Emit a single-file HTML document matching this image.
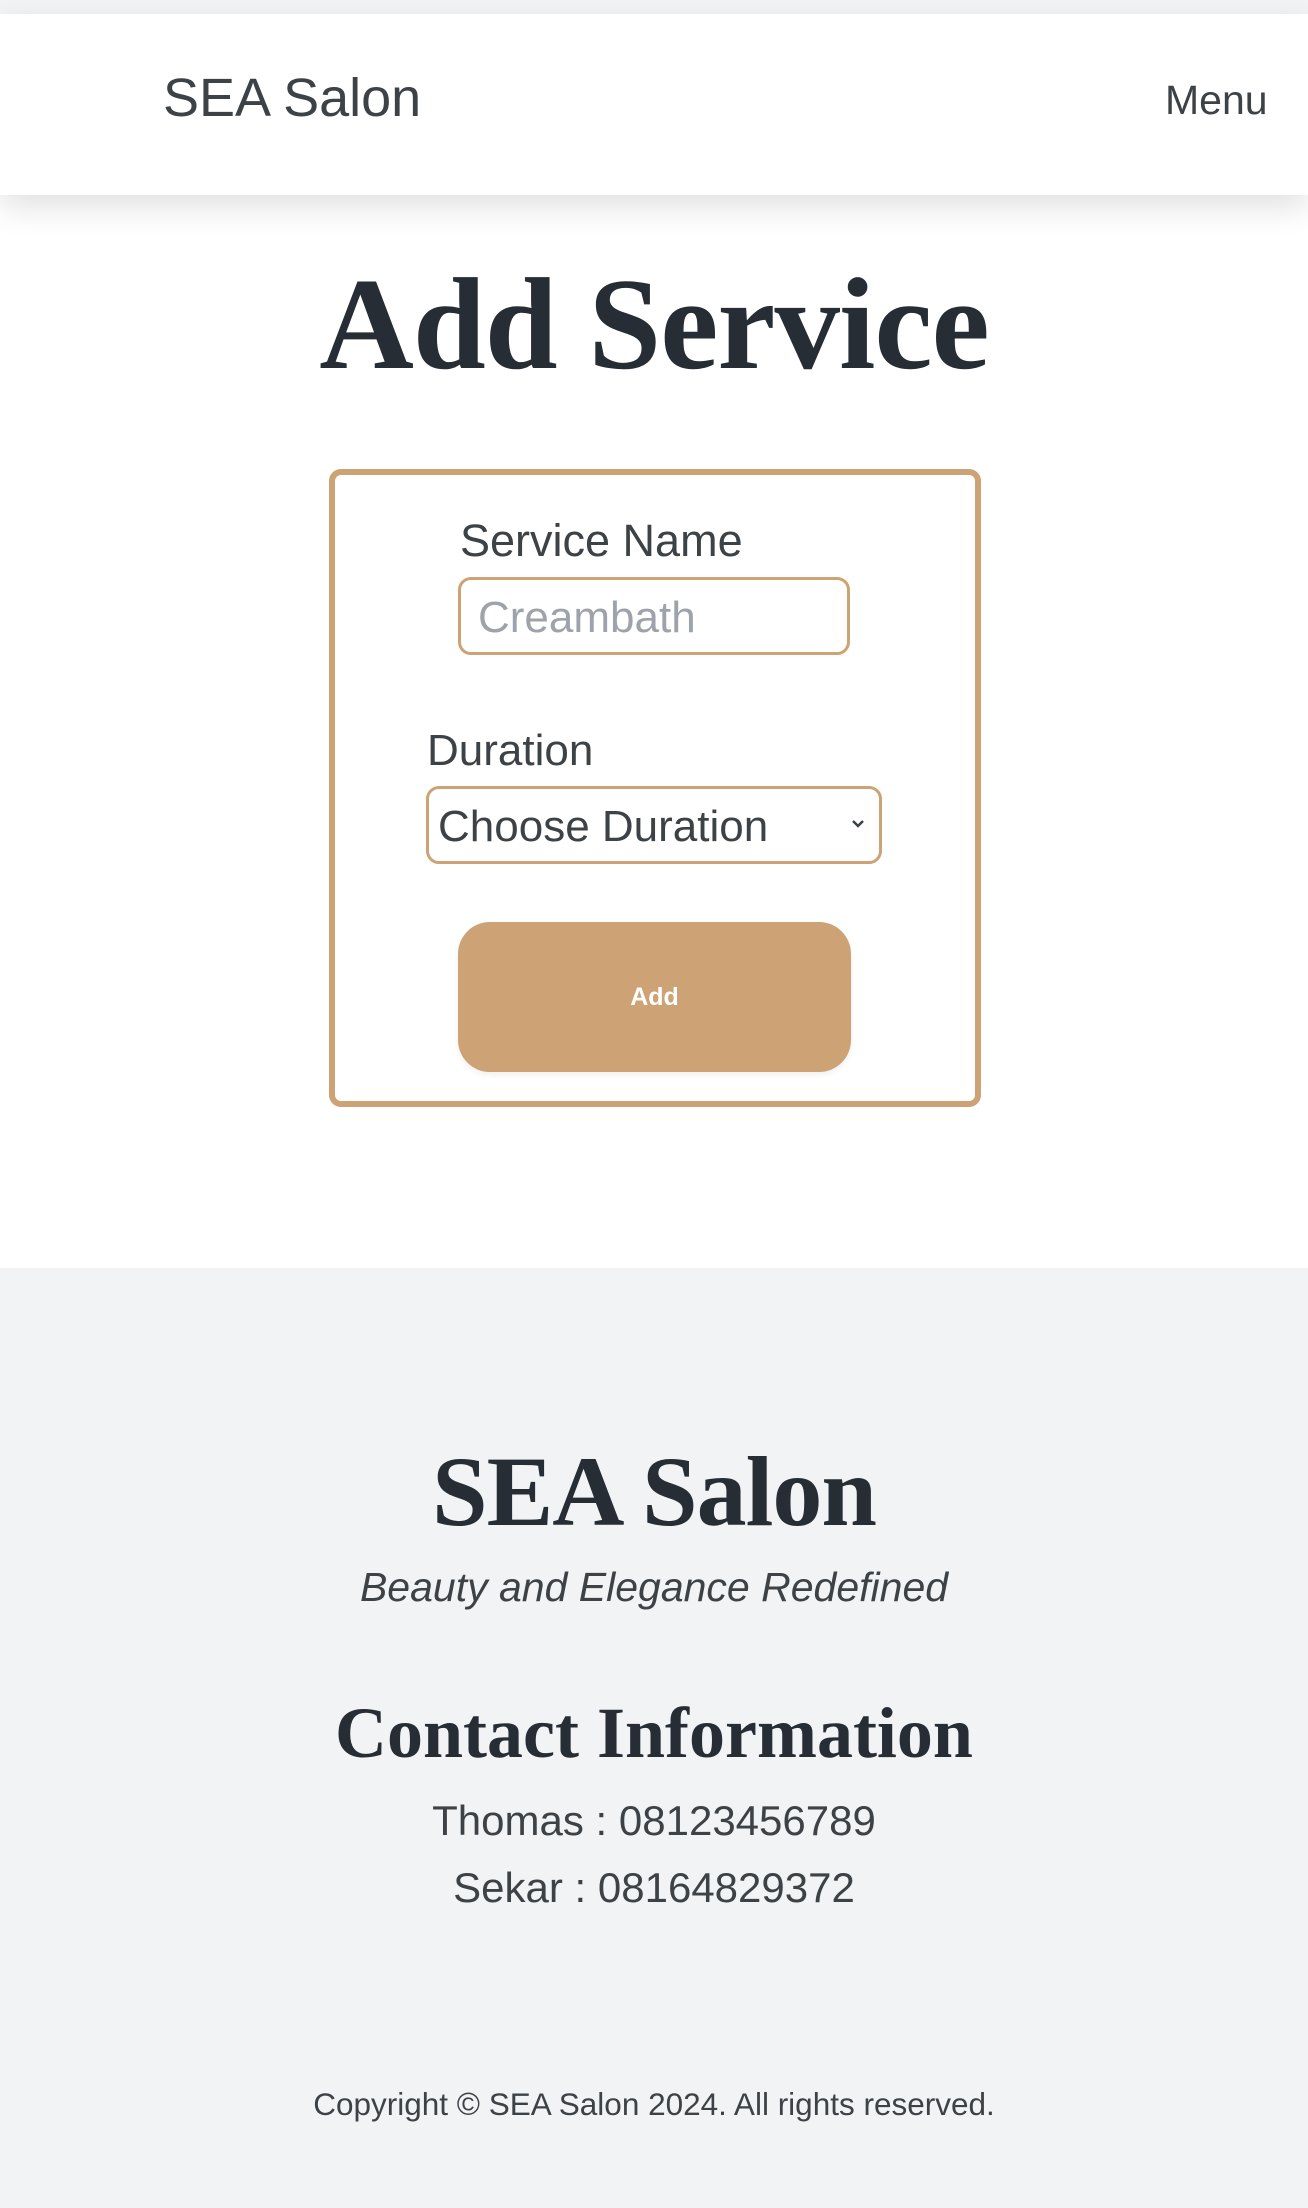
<!DOCTYPE html>
<html><head><meta charset="utf-8"><style>
*{margin:0;padding:0;box-sizing:border-box}
body{width:1308px;height:2208px;background:#fff;font-family:"Liberation Sans",sans-serif;position:relative;overflow:hidden}
.a{position:absolute;white-space:nowrap}
.top{left:0;top:0;width:1308px;height:14px;background:#f2f3f5}
.hdr{left:0;top:14px;width:1308px;height:181px;background:#fff;box-shadow:0 12px 30px rgba(0,0,0,0.12)}
.serif{font-family:"Liberation Serif",serif;font-weight:bold;color:#262d35}
.box{left:329px;top:469px;width:652px;height:638px;border:6px solid #cda275;border-radius:12px}
.field{border:3px solid #cda275;border-radius:13px;background:#fff}
.foot{left:0;top:1268px;width:1308px;height:940px;background:#f2f3f5}
.c{left:0;width:1308px;text-align:center}
</style></head><body>
<div class="a top"></div>
<div class="a hdr"></div>
<div class="a" style="left:163px;top:62px;font-size:54px;line-height:72px;color:#3d4247">SEA Salon</div>
<div class="a" style="left:1165px;top:76px;font-size:41px;line-height:48px;color:#3d4247">Menu</div>
<div class="a serif c" style="top:250px;font-size:131px;line-height:150px;letter-spacing:-1px">Add Service</div>
<div class="a box"></div>
<div class="a" style="left:460px;top:513px;font-size:45px;line-height:56px;color:#3d4247">Service Name</div>
<div class="a field" style="left:458px;top:577px;width:392px;height:78px"></div>
<div class="a" style="left:478px;top:590px;font-size:44px;line-height:56px;color:#9ea3ab">Creambath</div>
<div class="a" style="left:427px;top:723px;font-size:44px;line-height:56px;color:#3d4247">Duration</div>
<div class="a field" style="left:426px;top:786px;width:456px;height:78px"></div>
<div class="a" style="left:438px;top:799px;font-size:44px;line-height:56px;color:#3d4247">Choose Duration</div>
<svg class="a" style="left:850px;top:818px" width="16" height="12" viewBox="0 0 16 12"><path d="M3 3 L8 8 L13 3" fill="none" stroke="#3d4247" stroke-width="2.5"/></svg>
<div class="a" style="left:458px;top:922px;width:393px;height:150px;background:#cda275;border-radius:32px;box-shadow:0 3px 6px rgba(0,0,0,0.06)"></div>
<div class="a" style="left:458px;top:982px;width:393px;text-align:center;font-size:25px;line-height:30px;font-weight:bold;color:#fff">Add</div>
<div class="a foot"></div>
<div class="a serif c" style="top:1432px;font-size:100px;line-height:120px;letter-spacing:-1px">SEA Salon</div>
<div class="a c" style="top:1562px;font-size:41px;line-height:50px;font-style:italic;color:#3d4247">Beauty and Elegance Redefined</div>
<div class="a serif c" style="top:1693px;font-size:72px;line-height:80px">Contact Information</div>
<div class="a c" style="top:1796px;font-size:42px;line-height:50px;color:#3d4247">Thomas : 08123456789</div>
<div class="a c" style="top:1863px;font-size:42px;line-height:50px;color:#3d4247">Sekar : 08164829372</div>
<div class="a c" style="top:2085px;font-size:31.5px;line-height:38px;color:#3d4247">Copyright © SEA Salon 2024. All rights reserved.</div>
</body></html>
